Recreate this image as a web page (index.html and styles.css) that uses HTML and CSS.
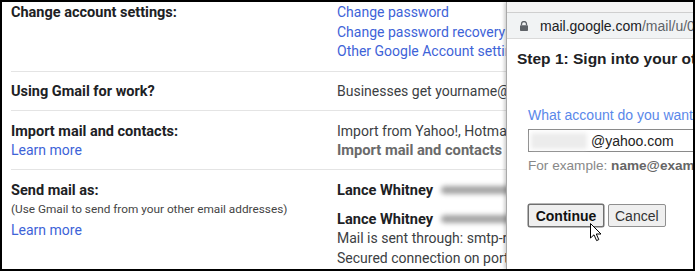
FILE: index.html
```html
<!DOCTYPE html>
<html>
<head>
<meta charset="utf-8">
<link rel="stylesheet" href="styles.css">
</head>
<body>
<div class="frame">
  <div class="settings">
    <div class="row row-first">
      <div class="label">Change account settings:</div>
      <div class="value">
        <div class="link">Change password</div>
        <div class="link">Change password recovery options</div>
        <div class="link">Other Google Account settings</div>
      </div>
    </div>
    <div class="row">
      <div class="label">Using Gmail for work?</div>
      <div class="value"><div>Businesses get yourname@example.com email</div></div>
    </div>
    <div class="row">
      <div class="label">Import mail and contacts:<div class="link normal">Learn more</div></div>
      <div class="value">
        <div>Import from Yahoo!, Hotmail, AOL, or other webmail</div>
        <div class="strong-gray">Import mail and contacts</div>
      </div>
    </div>
    <div class="row row-last">
      <div class="label">Send mail as:
        <div class="hint">(Use Gmail to send from your other email addresses)</div>
        <div class="link normal learn-last">Learn more</div>
      </div>
      <div class="value">
        <div class="who">Lance Whitney <span class="smudge"></span></div>
        <div class="entry">
          <div class="who">Lance Whitney <span class="smudge"></span></div>
          <div>Mail is sent through: smtp-relay</div>
          <div>Secured connection on port 465</div>
        </div>
      </div>
    </div>
  </div>

  <div class="popup">
    <div class="titlebar"></div>
    <div class="addressbar">
      <svg class="lock" width="8" height="10" viewBox="0 0 8 10">
        <path d="M1.5 4.2V3a2.5 2.5 0 0 1 5 0v1.2" fill="none" stroke="#5f6368" stroke-width="1.3"/>
        <rect x="0" y="4.2" width="8" height="5.8" rx="0.8" fill="#5f6368"/>
      </svg>
      <span class="host">mail.google.com</span><span class="path">/mail/u/0/?ui=2</span>
    </div>
    <div class="dialog">
      <h1 class="step">Step 1: Sign into your other email account</h1>
      <div class="form">
        <div class="question">What account do you want to add?</div>
        <div class="input"><span class="blurred"></span>@yahoo.com</div>
        <div class="example">For example: <b>name@example.com</b></div>
        <div class="buttons">
          <button class="btn btn-primary">Continue</button>
          <button class="btn">Cancel</button>
        </div>
      </div>
    </div>
    <svg class="cursor" width="13" height="19" viewBox="0 0 13 19">
      <path d="M0.5 0.5 L0.5 15 L4 11.8 L6.6 17.6 L8.8 16.6 L6.3 11 L11 11 Z" fill="#fff" stroke="#000" stroke-width="1" stroke-linejoin="round"/>
    </svg>
  </div>
</div>
</body>
</html>
```

FILE: styles.css
```css
html, body {
  margin: 0;
  padding: 0;
  background: #fff;
}

.frame {
  width: 695px;
  height: 271px;
  box-sizing: border-box;
  border: 2px solid #000;
  position: relative;
  overflow: hidden;
  background: #fff;
  font-family: Roboto, "Liberation Sans", Arial, sans-serif;
}

.settings {
  padding-left: 9px;
  font-size: 14px;
  line-height: 19.5px;
  color: #3c4043;
}

.row {
  display: grid;
  grid-template-columns: 326px 1fr;
  padding: 10.5px 0 8.5px;
  border-bottom: 1px solid #e4e4e4;
  white-space: nowrap;
}

.row-first {
  padding-top: 1px;
  padding-bottom: 9px;
}

.row-last {
  border-bottom: none;
}

.label {
  font-weight: 700;
  font-size: 14.5px;
  color: #202124;
}

.link {
  color: #3e63d8;
}

.link.normal {
  font-weight: 400;
  font-size: 14px;
}

.learn-last {
  margin-top: 1.5px;
}

.hint {
  font-weight: 400;
  font-size: 11.8px;
  line-height: 19px;
  color: #444;
}

.strong-gray {
  font-weight: 700;
  font-size: 14.7px;
  color: #6a6a6a;
}

.who {
  font-weight: 700;
  font-size: 14.6px;
  color: #202124;
}

.entry {
  margin-top: 9.5px;
}

.smudge {
  display: inline-block;
  width: 80px;
  height: 8px;
  margin-left: 4px;
  background: #a3a3a3;
  border-radius: 4px;
  filter: blur(2.5px);
  vertical-align: 1px;
}

.popup {
  position: absolute;
  left: 504px;
  top: 0;
  right: 0;
  bottom: 0;
  background: #fff;
  border-left: 1px solid #a8a8a8;
  box-shadow: -2px 0 3px rgba(0, 0, 0, 0.18);
  display: flex;
  flex-direction: column;
  font-family: "Liberation Sans", Arial, sans-serif;
  white-space: nowrap;
}

.titlebar {
  height: 10px;
  background: #f4f4f4;
  border-bottom: 1px solid #cfcfcf;
}

.addressbar {
  height: 25px;
  background: #f1f3f4;
  border-bottom: 1px solid #dadada;
  display: flex;
  align-items: center;
  padding-left: 13px;
  font-size: 14px;
}

.lock {
  margin-right: 12px;
  flex: none;
}

.host {
  color: #202124;
}

.path {
  color: #5f6368;
}

.dialog {
  padding: 10px 0 0 10px;
}

.step {
  margin: 0;
  font-size: 15.5px;
  line-height: 20px;
  font-weight: 700;
  color: #202124;
}

.form {
  padding-left: 11px;
  margin-top: 37px;
}

.question {
  font-size: 14px;
  line-height: 18px;
  color: #5a88ea;
}

.input {
  margin-top: 5px;
  height: 21px;
  border: 1px solid #8a8a8a;
  border-right: none;
  display: flex;
  align-items: center;
  font-size: 14px;
  color: #222;
}

.blurred {
  display: inline-block;
  width: 56px;
  height: 16px;
  margin: 0 4px 0 2px;
  background: #ececec;
  filter: blur(2px);
}

.example {
  margin-top: 5px;
  font-size: 13.6px;
  line-height: 17px;
  color: #888;
}

.example b {
  color: #666;
}

.buttons {
  margin-top: 30px;
  display: flex;
  gap: 4px;
}

.btn {
  font-family: "Liberation Sans", Arial, sans-serif;
  font-size: 14px;
  height: 23px;
  padding: 0 6px;
  background: #efefef;
  border: 1px solid #8f8f8f;
  border-radius: 2px;
  color: #333;
}

.btn-primary {
  font-weight: 700;
  color: #111;
  width: 76px;
  border-color: #6f6f6f;
  box-shadow: 0 0 0 0.5px #6f6f6f;
}

.cursor {
  position: absolute;
  left: 83px;
  top: 221px;
}
```
